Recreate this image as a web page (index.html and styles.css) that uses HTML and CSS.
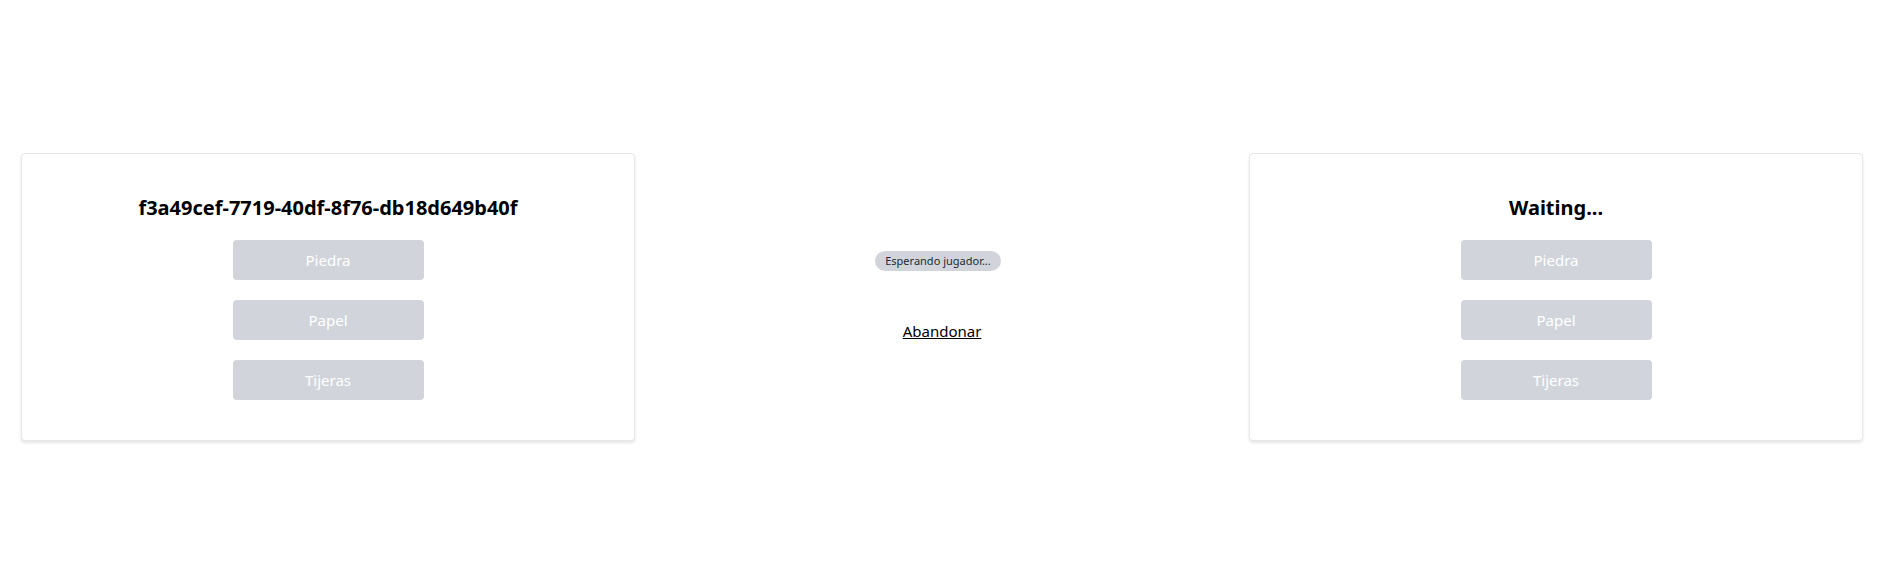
FILE: index.html
```html
<!DOCTYPE html>
<html lang="es">
<head>
<meta charset="utf-8">
<title>Piedra, Papel o Tijeras</title>
<link rel="stylesheet" href="styles.css">
</head>
<body>
<main class="board">
  <section class="card">
    <h2 class="player">f3a49cef-7719-40df-8f76-db18d649b40f</h2>
    <div class="moves">
      <button class="move" disabled>Piedra</button>
      <button class="move" disabled>Papel</button>
      <button class="move" disabled>Tijeras</button>
    </div>
  </section>
  <section class="status">
    <span class="badge">Esperando jugador...</span>
    <a class="leave" href="#">Abandonar</a>
  </section>
  <section class="card">
    <h2 class="player">Waiting...</h2>
    <div class="moves">
      <button class="move" disabled>Piedra</button>
      <button class="move" disabled>Papel</button>
      <button class="move" disabled>Tijeras</button>
    </div>
  </section>
</main>
</body>
</html>
```

FILE: styles.css
```css
* { box-sizing: border-box; }
html, body { margin: 0; padding: 0; background: #ffffff; }
body {
  font-family: "Noto Sans", "Open Sans", sans-serif;
  color: #000;
}
.board {
  display: grid;
  grid-template-columns: 1fr 1fr 1fr;
  align-items: center;
  min-height: 571px;
  padding: 22px 23px 0 21px;
}
.card {
  background: #fff;
  border: 1px solid #e5e7eb;
  border-radius: 4px;
  box-shadow: 0 2px 3px rgba(0,0,0,0.10);
  padding: 40px 20px;
  display: flex;
  flex-direction: column;
  align-items: center;
}
.player {
  margin: 0 0 18px 0;
  font-size: 20px;
  line-height: 28px;
  font-weight: 700;
}
.moves {
  display: flex;
  flex-direction: column;
  gap: 20px;
}
.move {
  width: 191px;
  height: 40px;
  border: 0;
  border-radius: 4px;
  background: #d1d5db;
  color: #ffffff;
  font-family: inherit;
  font-size: 15px;
  padding: 0;
}
.status {
  display: flex;
  flex-direction: column;
  align-items: center;
  gap: 48px;
}
.badge {
  display: inline-block;
  background: #d1d5db;
  color: #1f2937;
  font-size: 11px;
  line-height: 20px;
  height: 20px;
  padding: 0 10px;
  margin-right: 8px;
  border-radius: 10px;
}
.leave {
  color: #000;
  font-size: 15px;
  line-height: 24px;
  text-decoration: underline;
}
```
